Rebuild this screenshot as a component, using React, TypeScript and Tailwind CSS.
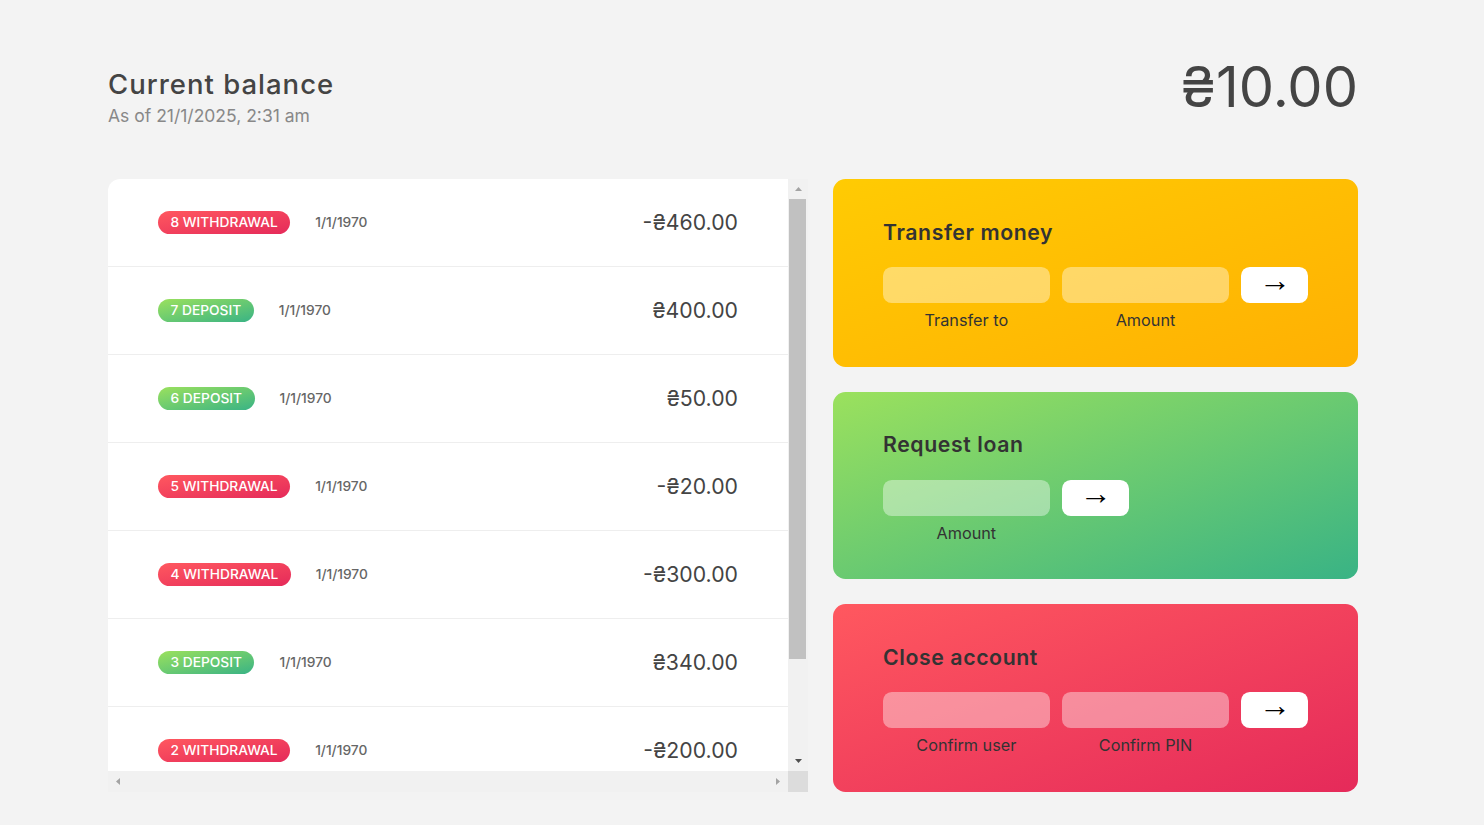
import React from "react";

const movements = [
  { n: 8, amount: -460 },
  { n: 7, amount: 400 },
  { n: 6, amount: 50 },
  { n: 5, amount: -20 },
  { n: 4, amount: -300 },
  { n: 3, amount: 340 },
  { n: 2, amount: -200 },
  { n: 1, amount: 200 },
];

function money(v: number) {
  return (v < 0 ? "-" : "") + "₴" + Math.abs(v).toFixed(2);
}

function Tri({ dir, color }: { dir: "up" | "down" | "left" | "right"; color: string }) {
  const pts = {
    up: "0,4 7,4 3.5,0",
    down: "0,0 7,0 3.5,4",
    left: "4,0 4,7 0,3.5",
    right: "0,0 0,7 4,3.5",
  }[dir];
  const vertical = dir === "up" || dir === "down";
  return (
    <svg width={vertical ? 7 : 4} height={vertical ? 4 : 7} viewBox={vertical ? "0 0 7 4" : "0 0 4 7"}>
      <polygon points={pts} fill={color} />
    </svg>
  );
}

function MovementRow({ n, amount }: { n: number; amount: number }) {
  const deposit = amount > 0;
  return (
    <div className="flex items-center border-b border-[#eee] px-[50px] py-[28px]">
      <div
        className={`mr-[25px] rounded-full px-[12.5px] py-[1.25px] text-[13.75px] font-medium uppercase leading-[1.5] text-white ${
          deposit ? "bg-linear-to-tl/srgb from-[#39b385] to-[#9be15d]" : "bg-linear-to-tl/srgb from-[#e52a5a] to-[#ff585f]"
        }`}
      >
        {n} {deposit ? "deposit" : "withdrawal"}
      </div>
      <div className="text-[13.75px] font-medium uppercase leading-[1.5] text-[#666]">1/1/1970</div>
      <div className="ml-auto text-[21.25px] leading-[31px]">{money(amount)}</div>
    </div>
  );
}

function Input() {
  return (
    <input
      type="text"
      className="w-full rounded-[8.75px] bg-white/40 px-[12.5px] py-[3.75px] text-center text-[18.75px] leading-[1.5] text-[#333] outline-none"
    />
  );
}

function Btn() {
  return (
    <button
      className="h-[36px] rounded-[8.75px] bg-white text-[32px] leading-none text-black"
      style={{ fontFamily: '"Liberation Sans", sans-serif' }}
    >
      <span className="inline-block -translate-y-[5px]">→</span>
    </button>
  );
}

function Label({ children }: { children: React.ReactNode }) {
  return <label className="text-center text-[16.25px] leading-[1.5]">{children}</label>;
}

export default function App() {
  return (
    <div className="min-h-screen bg-[#f3f3f3] text-[#444]" style={{ fontFamily: 'Inter, "DejaVu Sans", sans-serif' }}>
      <div className="ml-[108px] w-[1250px] pt-[45px]">
        <div className="flex items-end justify-between">
          <div>
            <p className="-mb-[2.5px] text-[27.5px] font-medium leading-[1.5] tracking-[1px]">Current balance</p>
            <p className="text-[17.5px] leading-[1.5] text-[#888]">As of 21/1/2025, 2:31 am</p>
          </div>
          <p className="text-[56px] leading-[1.5]">₴10.00</p>
        </div>

        <div className="mt-[50px] grid grid-cols-[700px_525px] grid-rows-[repeat(3,187.5px)] gap-[25px]">
          <div className="row-span-3 flex flex-col overflow-hidden rounded-tl-[12px] bg-white">
            <div className="flex min-h-0 flex-1">
              <div className="min-w-0 flex-1 overflow-hidden">
                {movements.map((m) => (
                  <MovementRow key={m.n} n={m.n} amount={m.amount} />
                ))}
              </div>
              <div className="flex w-[20px] flex-col bg-[#f1f1f1]">
                <div className="flex h-[20px] items-center justify-center">
                  <Tri dir="up" color="#a3a3a3" />
                </div>
                <div className="flex-1">
                  <div className="ml-[1px] h-[460px] w-[17px] bg-[#c1c1c1]" />
                </div>
                <div className="flex h-[20px] items-center justify-center">
                  <Tri dir="down" color="#505050" />
                </div>
              </div>
            </div>
            <div className="flex h-[21px] bg-[#f1f1f1]">
              <div className="flex w-[20px] items-center justify-center">
                <Tri dir="left" color="#a3a3a3" />
              </div>
              <div className="flex-1" />
              <div className="flex w-[20px] items-center justify-center">
                <Tri dir="right" color="#a3a3a3" />
              </div>
              <div className="w-[20px] bg-[#dcdcdc]" />
            </div>
          </div>

          <div className="rounded-[12.5px] bg-linear-to-tl/srgb from-[#ffb003] to-[#ffcb03] px-[50px] py-[37.5px] text-[#333]">
            <h2 className="mb-[18.75px] text-[21.25px] font-semibold leading-[1.5] tracking-[0.6px]">Transfer money</h2>
            <form className="grid grid-cols-[2.5fr_2.5fr_1fr] gap-x-[12.5px] gap-y-[5px]">
              <Input />
              <Input />
              <Btn />
              <Label>Transfer to</Label>
              <Label>Amount</Label>
            </form>
          </div>

          <div className="rounded-[12.5px] bg-linear-to-tl/srgb from-[#39b385] to-[#9be15d] px-[50px] py-[37.5px] text-[#333]">
            <h2 className="mb-[18.75px] text-[21.25px] font-semibold leading-[1.5] tracking-[0.6px]">Request loan</h2>
            <form className="grid grid-cols-[2.5fr_1fr_2.5fr] gap-x-[12.5px] gap-y-[5px]">
              <Input />
              <Btn />
              <div />
              <Label>Amount</Label>
            </form>
          </div>

          <div className="rounded-[12.5px] bg-linear-to-tl/srgb from-[#e52a5a] to-[#ff585f] px-[50px] py-[37.5px] text-[#333]">
            <h2 className="mb-[18.75px] text-[21.25px] font-semibold leading-[1.5] tracking-[0.6px]">Close account</h2>
            <form className="grid grid-cols-[2.5fr_2.5fr_1fr] gap-x-[12.5px] gap-y-[5px]">
              <Input />
              <Input />
              <Btn />
              <Label>Confirm user</Label>
              <Label>Confirm PIN</Label>
            </form>
          </div>
        </div>
      </div>
    </div>
  );
}
